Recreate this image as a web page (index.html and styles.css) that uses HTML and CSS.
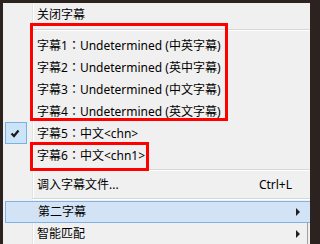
FILE: index.html
```html
<!DOCTYPE html>
<html>
<head>
<meta charset="utf-8">
<link rel="stylesheet" href="styles.css">
</head>
<body>
<div class="page">
  <div class="menu">
    <div class="item"><span class="gutter"></span><span class="label">关闭字幕</span></div>
    <div class="sep"></div>
    <div class="item"><span class="gutter"></span><span class="label">字幕1<span class="colon">：</span>Undetermined (中英字幕)</span></div>
    <div class="item"><span class="gutter"></span><span class="label">字幕2<span class="colon">：</span>Undetermined (英中字幕)</span></div>
    <div class="item"><span class="gutter"></span><span class="label">字幕3<span class="colon">：</span>Undetermined (中文字幕)</span></div>
    <div class="item"><span class="gutter"></span><span class="label">字幕4<span class="colon">：</span>Undetermined (英文字幕)</span></div>
    <div class="item"><span class="gutter"><span class="check"><svg width="20" height="20" viewBox="0 0 20 20"><path d="M5.5 10.5 L8 13 L12.5 7.5" fill="none" stroke="#1a1a1a" stroke-width="2.2"/></svg></span></span><span class="label">字幕5<span class="colon">：</span>中文&lt;chn&gt;</span></div>
    <div class="item"><span class="gutter"></span><span class="label">字幕6<span class="colon">：</span>中文&lt;chn1&gt;</span></div>
    <div class="sep"></div>
    <div class="item"><span class="gutter"></span><span class="label">调入字幕文件...</span><span class="shortcut">Ctrl+L</span><span class="arrow-cell"></span></div>
    <div class="sep sep-short"></div>
    <div class="item item-hot"><span class="gutter"></span><span class="label">第二字幕</span><span class="arrow-cell"><span class="arrow"></span></span></div>
    <div class="item"><span class="gutter"></span><span class="label">智能匹配</span><span class="arrow-cell"><span class="arrow"></span></span></div>
  </div>
  <div class="mark mark-a"></div>
  <div class="mark mark-b"></div>
  <div class="edge"></div>
</div>
</body>
</html>
```

FILE: styles.css
```css
html, body {
  margin: 0;
  padding: 0;
  background: #2c2220;
  overflow: hidden;
}
.page {
  position: relative;
  width: 310px;
  height: 244px;
  padding: 3px 0 0 3px;
  box-sizing: border-box;
  overflow: hidden;
}
.menu {
  width: 309px;
  height: 260px;
  padding-top: 1px;
  box-sizing: border-box;
  background: linear-gradient(to right, #f0f0f0 29px, #e2e3e3 29px, #e2e3e3 30px, #ffffff 30px, #ffffff 31px, #f0f0f0 31px);
  font-family: "Noto Sans", "Noto Sans CJK SC", sans-serif;
  font-size: 12px;
  color: #000;
}
.item {
  display: flex;
  align-items: center;
  height: 22px;
  line-height: 22px;
  box-sizing: border-box;
}
.gutter {
  width: 29px;
  height: 22px;
  flex: none;
  display: flex;
  align-items: center;
  padding-left: 2px;
  box-sizing: border-box;
}
.check {
  width: 22px;
  height: 22px;
  box-sizing: border-box;
  border: 1px solid #7ab1e4;
  background: #cce4f7;
  display: block;
}
.check svg {
  display: block;
}
.label {
  flex: 1;
  padding-left: 5px;
  white-space: nowrap;
}
.colon {
  font-family: "Noto Sans CJK TC", "Noto Sans CJK SC", sans-serif;
}
.shortcut {
  white-space: nowrap;
}
.arrow-cell {
  width: 20px;
  flex: none;
  display: flex;
  align-items: center;
  height: 100%;
}
.arrow {
  margin-left: 4px;
  width: 0;
  height: 0;
  border-top: 4px solid transparent;
  border-bottom: 4px solid transparent;
  border-left: 4px solid #202020;
}
.sep {
  margin: 3px 0 3px 29px;
  height: 1px;
  background: #d7d7d7;
  border-bottom: 1px solid #ffffff;
}
.sep.sep-short {
  margin: 2px 0 1px 29px;
}
.item-hot {
  margin-left: 2px;
  background: #d1e3f5;
  border: 1px solid #7fb2e6;
  border-right: none;
}
.item-hot .gutter {
  width: 26px;
  height: 20px;
}
.item-hot .label {
  padding-left: 6px;
}
.mark {
  position: absolute;
  border: 3px solid #ff0000;
  box-sizing: border-box;
}
.mark-a {
  left: 30px;
  top: 23px;
  width: 198px;
  height: 98px;
}
.mark-b {
  left: 30px;
  top: 142px;
  width: 119px;
  height: 29px;
}
.edge {
  position: absolute;
  left: 307px;
  top: 222px;
  width: 1px;
  height: 22px;
  background: #a0a0a0;
}
```
